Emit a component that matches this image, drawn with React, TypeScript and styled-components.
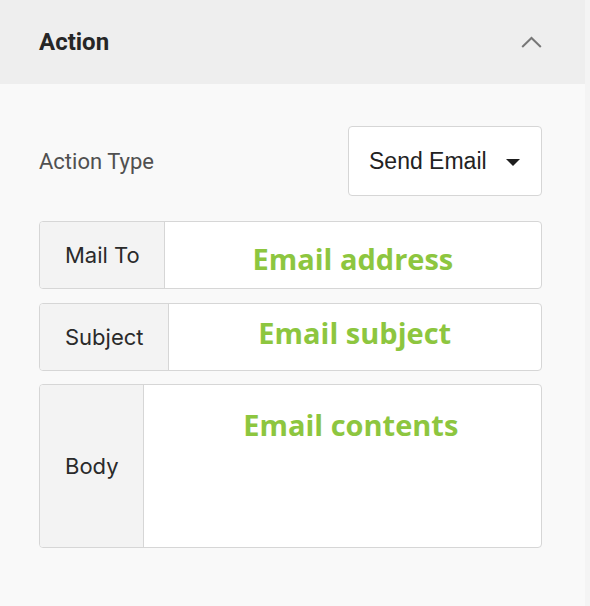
import React from 'react';
import styled, { createGlobalStyle } from 'styled-components';

const GlobalStyle = createGlobalStyle`
  html, body {
    margin: 0;
    padding: 0;
    background: #f4f4f4;
  }
  * {
    box-sizing: border-box;
  }
`;

const Panel = styled.div`
  width: 585px;
  height: 606px;
  background: #f9f9f9;
  font-family: Inter, 'Liberation Sans', sans-serif;
`;

const Header = styled.div`
  height: 84px;
  background: #eeeeee;
  display: flex;
  align-items: center;
  justify-content: space-between;
  padding: 0 43px 0 39px;
`;

const Title = styled.h2`
  margin: 0;
  font-family: Roboto, 'Liberation Sans', sans-serif;
  font-size: 24px;
  font-weight: 700;
  color: #262626;
`;

const Toggle = styled.button`
  border: none;
  background: none;
  padding: 0;
  display: flex;
  cursor: pointer;
  color: #777;
`;

const Body = styled.div`
  padding: 42px 43px 0 39px;
  display: flex;
  flex-direction: column;
`;

const TypeRow = styled.div`
  display: flex;
  align-items: center;
  justify-content: space-between;
  margin-bottom: 25px;
`;

const TypeLabel = styled.span`
  font-family: Roboto, 'Liberation Sans', sans-serif;
  font-size: 22px;
  font-weight: 400;
  color: #505050;
`;

const Select = styled.div`
  width: 194px;
  height: 70px;
  background: #fff;
  border: 1px solid #d6d6d6;
  border-radius: 4px;
  display: flex;
  align-items: center;
  justify-content: space-between;
  padding: 0 21px 0 20px;
  font-family: 'Liberation Sans', Arial, sans-serif;
  font-size: 23px;
  color: #222;
`;

const Caret = styled.span`
  width: 0;
  height: 0;
  border-left: 7px solid transparent;
  border-right: 7px solid transparent;
  border-top: 7px solid #1e1e1e;
  margin-top: 2px;
`;

const Group = styled.div<{ $height: number; $gap: number }>`
  display: flex;
  height: ${(p) => p.$height}px;
  margin-bottom: ${(p) => p.$gap}px;
  border: 1px solid #d6d6d6;
  border-radius: 4px;
  overflow: hidden;
  background: #fff;
`;

const Addon = styled.div`
  display: flex;
  align-items: center;
  padding: 0 24px 0 25px;
  background: #f3f3f3;
  border-right: 1px solid #d6d6d6;
  font-size: 22px;
  color: #2a2a2a;
`;

const Field = styled.div<{ $top: number; $left: number }>`
  flex: 1;
  display: flex;
  justify-content: center;
  align-items: flex-start;
  padding: ${(p) => p.$top}px 0 0 ${(p) => p.$left}px;
  font-family: 'Open Sans', sans-serif;
  font-weight: 700;
  font-size: 29px;
  line-height: 1;
  color: #8dc63f;
`;

const fields = [
  { label: 'Mail To', value: 'Email address', height: 68, gap: 14, top: 22, left: 0 },
  { label: 'Subject', value: 'Email subject', height: 68, gap: 13, top: 14, left: 0 },
  { label: 'Body', value: 'Email contents', height: 164, gap: 0, top: 25, left: 17 },
];

export default function App() {
  return (
    <>
      <GlobalStyle />
      <Panel>
        <Header>
          <Title>Action</Title>
          <Toggle aria-label="Collapse">
            <svg width="21" height="12" viewBox="0 0 21 12" fill="none">
              <path d="M1.2 11 L10.5 2 L19.8 11" stroke="currentColor" strokeWidth="2" />
            </svg>
          </Toggle>
        </Header>
        <Body>
          <TypeRow>
            <TypeLabel>Action Type</TypeLabel>
            <Select>
              Send Email
              <Caret />
            </Select>
          </TypeRow>
          {fields.map((f) => (
            <Group key={f.label} $height={f.height} $gap={f.gap}>
              <Addon>{f.label}</Addon>
              <Field $top={f.top} $left={f.left}>
                {f.value}
              </Field>
            </Group>
          ))}
        </Body>
      </Panel>
    </>
  );
}
